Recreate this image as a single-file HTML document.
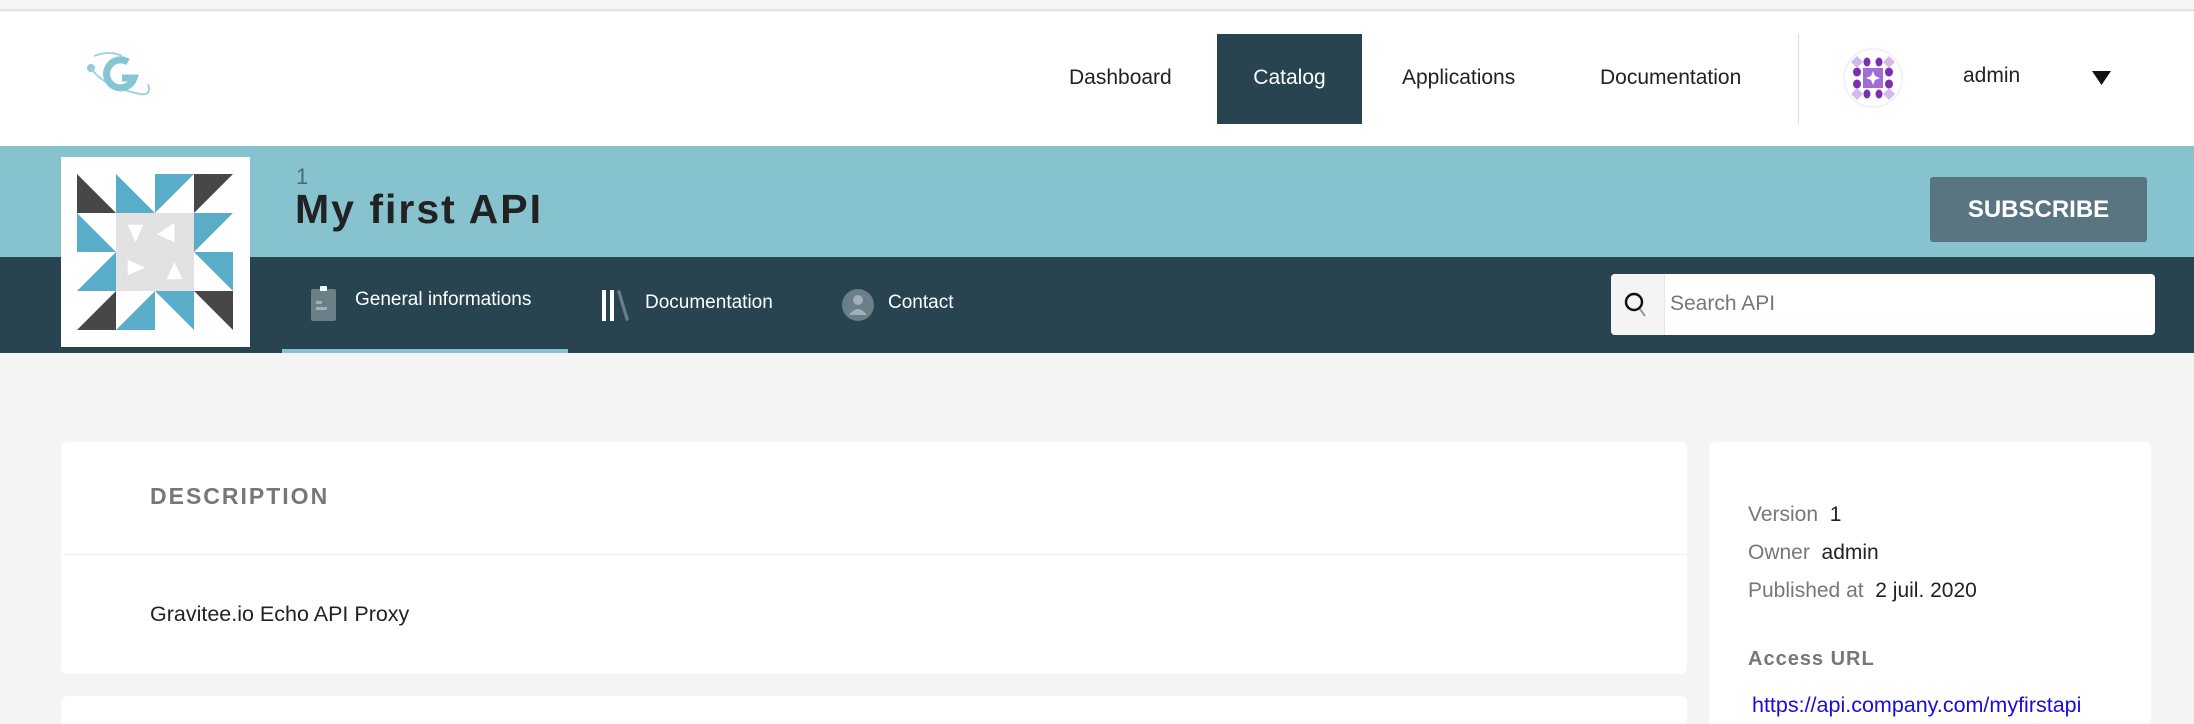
<!DOCTYPE html>
<html style="overflow:hidden;height:724px"><head><meta charset="utf-8"><style>
*{margin:0;padding:0;box-sizing:border-box}
body{width:2194px;height:724px;overflow:hidden;background:#f4f4f4;font-family:"Liberation Sans",sans-serif;position:relative}
.a{position:absolute}
.nav{font-size:21px;color:#222;top:64px;line-height:28px}
</style></head><body>
<div class="a" style="left:0;top:0;width:2194px;height:11px;background:#f6f6f6;border-bottom:2px solid #e4e4e4"></div>
<div class="a" style="left:0;top:12px;width:2194px;height:134px;background:#fff"></div>
<svg class="a" style="left:82px;top:48px" width="76" height="52" viewBox="0 0 76 52">
<path d="M12 8 Q28 2 40 8" stroke="#9fd3df" stroke-width="2" fill="none"/>
<circle cx="9" cy="20" r="4" fill="#8ccad8"/>
<path d="M9 20 Q20 38 58 46 Q70 48 66 36" stroke="#9fd3df" stroke-width="2" fill="none"/>
<path d="M46 14 A14 14 0 1 0 52 30 L40 30" stroke="#86c6d4" stroke-width="7" fill="none"/>
</svg>
<div class="a nav" style="left:1069px">Dashboard</div>
<div class="a" style="left:1217px;top:34px;width:145px;height:90px;background:#284450"></div>
<div class="a nav" style="left:1217px;width:145px;text-align:center;color:#fff">Catalog</div>
<div class="a nav" style="left:1402px">Applications</div>
<div class="a nav" style="left:1600px">Documentation</div>
<div class="a" style="left:1798px;top:34px;width:1px;height:90px;background:#ddd"></div>
<svg class="a" style="left:1843px;top:48px" width="60" height="60" viewBox="0 0 60 60">
<circle cx="30" cy="30" r="29" fill="#fff" stroke="#f2f2f2" stroke-width="2"/>
<rect x="20" y="20" width="20" height="20" fill="#a36bd6"/>
<path d="M30 23 L32 28 L37 30 L32 32 L30 37 L28 32 L23 30 L28 28Z" fill="#fff"/>
<g fill="#7b2fb0"><ellipse cx="24" cy="14" rx="3.5" ry="4.5"/><ellipse cx="36" cy="14" rx="3.5" ry="4.5"/><ellipse cx="24" cy="46" rx="3.5" ry="4.5"/><ellipse cx="36" cy="46" rx="3.5" ry="4.5"/><ellipse cx="14" cy="24" rx="4" ry="4.5"/><ellipse cx="14" cy="36" rx="4" ry="4.5"/><ellipse cx="46" cy="24" rx="4" ry="4.5"/><ellipse cx="46" cy="36" rx="4" ry="4.5"/></g>
<g fill="#d5b8ee"><path d="M14 8 L20 14 L14 20 L8 14Z"/><path d="M46 8 L52 14 L46 20 L40 14Z"/><path d="M14 40 L20 46 L14 52 L8 46Z"/><path d="M46 40 L52 46 L46 52 L40 46Z"/></g>
</svg>
<div class="a nav" style="left:1963px;top:62px">admin</div>
<svg class="a" style="left:2092px;top:71px" width="19" height="14"><path d="M0 0H19L9.5 14Z" fill="#111"/></svg>

<div class="a" style="left:0;top:146px;width:2194px;height:111px;background:#87c2cf"></div>
<div class="a" style="left:0;top:257px;width:2194px;height:96px;background:#284450"></div>
<div class="a" style="left:296px;top:164px;font-size:22px;color:#4b6b78">1</div>
<div class="a" style="left:295px;top:186px;font-size:41px;font-weight:bold;color:#222;letter-spacing:2px">My first API</div>
<div class="a" style="left:1930px;top:177px;width:217px;height:65px;background:#5a7582;border-radius:3px;color:#fff;font-weight:bold;font-size:24px;text-align:center;line-height:65px">SUBSCRIBE</div>

<div class="a" style="left:61px;top:157px;width:189px;height:190px;background:#fff"></div>
<svg class="a" style="left:77px;top:174px" width="156" height="156" viewBox="0 0 4 4">
<rect x="1" y="1" width="2" height="2" fill="#e2e2e2"/>
<g fill="#474747"><path d="M0 0V1H1Z"/><path d="M3 0H4L3 1Z"/><path d="M1 3V4H0Z"/><path d="M3 3H4V4Z"/></g>
<g fill="#5aadc8"><path d="M1 0V1H2Z"/><path d="M2 0H3L2 1Z"/><path d="M0 1V2H1Z"/><path d="M3 1H4L3 2Z"/><path d="M1 2V3H0Z"/><path d="M3 2H4V3Z"/><path d="M2 3V4H1Z"/><path d="M2 3H3V4Z"/></g>
<g fill="#fff"><path d="M1.3 1.3H1.7L1.5 1.75Z"/><path d="M2.5 1.25V1.75L2.05 1.55Z"/><path d="M1.3 2.2L1.75 2.4L1.3 2.6Z"/><path d="M2.5 2.25L2.7 2.7H2.3Z"/></g>
</svg>

<svg class="a" style="left:311px;top:286px" width="25" height="35"><rect x="0" y="3" width="25" height="32" rx="2" fill="#6b7f88"/><rect x="9" y="0" width="7" height="5" rx="1" fill="#fff"/><rect x="5" y="15" width="6" height="3" fill="#9fb0b7"/><rect x="5" y="21" width="11" height="3" fill="#9fb0b7"/></svg>
<div class="a" style="left:355px;top:289px;font-size:19px;color:#fff">General informations</div>
<div class="a" style="left:282px;top:349px;width:286px;height:4px;background:#87c2cf"></div>
<svg class="a" style="left:602px;top:290px" width="30" height="32"><rect x="0" y="0" width="4" height="31" fill="#fff"/><rect x="8" y="0" width="4" height="31" fill="#fff"/><path d="M15 1 L18 0 L27 30 L24 31Z" fill="#6b7f88"/></svg>
<div class="a" style="left:645px;top:292px;font-size:19px;color:#fff">Documentation</div>
<svg class="a" style="left:842px;top:289px" width="32" height="32"><circle cx="16" cy="16" r="16" fill="#6b7f88"/><circle cx="16" cy="11" r="5" fill="#9fb0b7"/><path d="M7 26 Q16 14 25 26Z" fill="#9fb0b7"/></svg>
<div class="a" style="left:888px;top:292px;font-size:19px;color:#fff">Contact</div>

<div class="a" style="left:1611px;top:274px;width:544px;height:61px;background:#fff;border-radius:4px;overflow:hidden"><div style="width:54px;height:61px;background:#f4f4f4;border-right:1px solid #e6e6e6"></div></div>
<svg class="a" style="left:1624px;top:292px" width="24" height="26"><circle cx="10" cy="10" r="8" stroke="#111" stroke-width="2.5" fill="none"/><path d="M16 17 L21 24" stroke="#999" stroke-width="2"/></svg>
<div class="a" style="left:1670px;top:292px;font-size:21px;color:#777">Search API</div>

<div class="a" style="left:61px;top:442px;width:1626px;height:232px;background:#fff;border-radius:6px"></div>
<div class="a" style="left:61px;top:554px;width:1626px;height:1px;background:#efefef"></div>
<div class="a" style="left:150px;top:483px;font-size:23px;font-weight:bold;color:#777;letter-spacing:2px">DESCRIPTION</div>
<div class="a" style="left:150px;top:602px;font-size:21.5px;color:#222">Gravitee.io Echo API Proxy</div>
<div class="a" style="left:61px;top:696px;width:1626px;height:28px;background:#fff;border-radius:6px 6px 0 0"></div>

<div class="a" style="left:1709px;top:442px;width:442px;height:282px;background:#fff;border-radius:6px 6px 0 0"></div>
<div class="a" style="left:1748px;top:503px;font-size:21px;color:#777;line-height:24px">Version&nbsp;&nbsp;<span style="color:#222">1</span></div>
<div class="a" style="left:1748px;top:541px;font-size:21px;color:#777;line-height:24px">Owner&nbsp;&nbsp;<span style="color:#222">admin</span></div>
<div class="a" style="left:1748px;top:579px;font-size:21px;color:#777;line-height:24px">Published at&nbsp;&nbsp;<span style="color:#222">2 juil. 2020</span></div>
<div class="a" style="left:1748px;top:647px;font-size:20px;color:#777;font-weight:bold;letter-spacing:1px;line-height:24px">Access URL</div>
<div class="a" style="left:1752px;top:693px;font-size:21.5px;color:#1a0dd6;line-height:24px">https://api.company.com/myfirstapi</div>
</body></html>
